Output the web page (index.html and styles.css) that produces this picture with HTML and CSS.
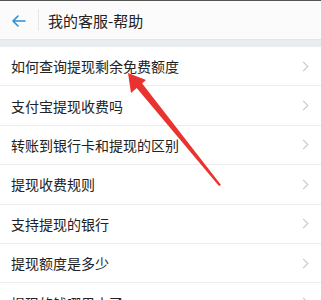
FILE: index.html
```html
<!DOCTYPE html>
<html lang="zh-CN">
<head>
<meta charset="UTF-8" />
<meta name="viewport" content="width=device-width, initial-scale=1.0" />
<title>我的客服-帮助</title>
<link rel="stylesheet" href="styles.css">
</head>
<body>
<header class="topbar">
    <span class="back">
    <svg width="16" height="14" viewBox="0 0 16 14"><path d="M14 7H2M7 2L2 7l5 5" fill="none" stroke="#2e8fd6" stroke-width="1.6" stroke-linecap="round" stroke-linejoin="round"/></svg>
    </span>
    <span class="divider"></span>
    <h1>我的客服-帮助</h1>
</header>
<div class="gap"></div>

<ul class="list">
    <li><span>如何查询提现剩余免费额度</span><i class="chev"></i></li>
    <li><span>支付宝提现收费吗</span><i class="chev"></i></li>
    <li><span>转账到银行卡和提现的区别</span><i class="chev"></i></li>
    <li><span>提现收费规则</span><i class="chev"></i></li>
    <li><span>支持提现的银行</span><i class="chev"></i></li>
    <li><span>提现额度是多少</span><i class="chev"></i></li>
    <li><span>提现的钱哪里去了</span><i class="chev"></i></li>
</ul>

<svg class="mark" width="321" height="300" viewBox="0 0 321 300">
    <polygon points="128,73 131,93 146,80" fill="#e8332f"/>
    <polygon points="135,86 141,82 221,185 219,186" fill="#e8332f"/>
</svg>
</body>
</html>
```

FILE: styles.css
```css
body {
margin: 0;
font-family: "Noto Sans CJK SC", "Noto Sans", sans-serif;
background: #fff;
color: #222;
width: 321px;
height: 300px;
overflow: hidden;
position: relative;
}

.topbar {
height: 39px;
background: #fbfbfb;
border-top: 1px solid #555;
display: flex;
align-items: center;
box-sizing: border-box;
}

.back {
width: 38px;
display: flex;
justify-content: center;
padding-top: 2px;
}

.divider {
width: 1px;
height: 22px;
background: #e6e6e6;
margin-right: 9px;
}

.topbar h1 {
margin: 0;
font-size: 15px;
font-weight: normal;
color: #222;
}

.gap {
height: 8px;
background: #e9edf0;
border-top: 1px solid #e2e6e9;
box-sizing: border-box;
}

.list {
list-style: none;
margin: 0;
padding: 0;
}

.list li {
height: 38.4px;
border-bottom: 1px solid #ececec;
display: flex;
align-items: center;
justify-content: space-between;
padding: 0 14px 0 11px;
font-size: 14px;
}

.chev {
width: 6px;
height: 6px;
border-top: 1.2px solid #c4c4c4;
border-right: 1.2px solid #c4c4c4;
transform: rotate(45deg);
}

.mark {
position: absolute;
left: 0;
top: 0;
}
```
